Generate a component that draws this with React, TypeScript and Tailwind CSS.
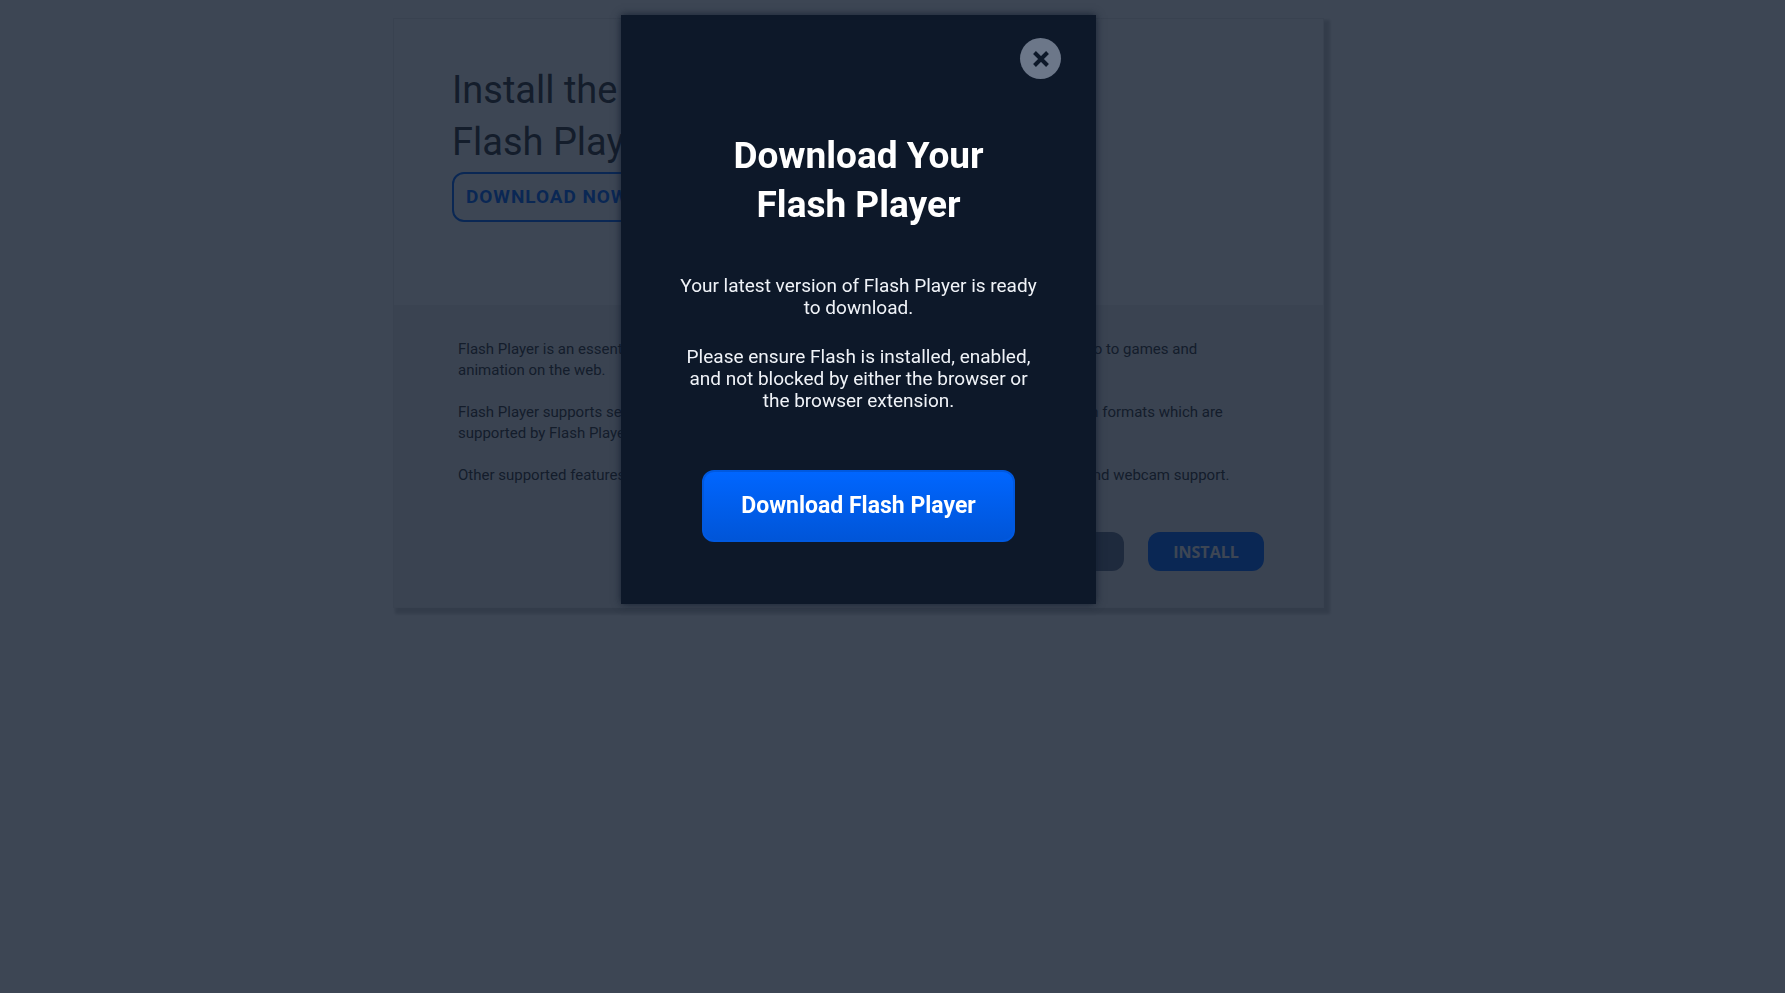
import { useState } from 'react';

const paragraphs = [
  'Flash Player is an essential plug-in for your browser that allows you to view everything from video to games and animation on the web.',
  'Flash Player supports several video and audio formats, and it can play the most common stream formats which are supported by Flash Player.',
  'Other supported features of the Flash Player include full screen modes, hardware acceleration and webcam support.',
];

function InstallCard() {
  return (
    <main className="w-full max-w-[931px] bg-[#efefef] border border-[#ebebeb] shadow-[4px_4px_3px_2px_rgba(0,0,0,0.2)]">
      <section className="bg-white h-[286px] px-[58px] pt-[45px]">
        <h1 className="text-[38px] leading-[52px] text-[#333]">
          Install the latest version of
          <br />
          Flash Player
        </h1>
        <button className="mt-1 h-[50px] px-3 rounded-xl border-2 border-[#0066ff] text-[#0066ff] text-[19px] font-bold tracking-wider">
          DOWNLOAD NOW
        </button>
      </section>

      <section className="pl-16 pr-[59px] pt-[34px] pb-9">
        <div className="space-y-[21px] pr-6 text-[15px] leading-[21px] text-[#333]">
          {paragraphs.map(text => (
            <p key={text}>{text}</p>
          ))}
        </div>
        <div className="mt-[46px] flex justify-end gap-6 font-['Open_Sans',sans-serif] text-base font-bold text-white">
          <button className="h-[39px] w-[116px] rounded-xl bg-[#66748a]">LATER</button>
          <button className="h-[39px] w-[116px] rounded-xl bg-[#0066ff]">INSTALL</button>
        </div>
      </section>
    </main>
  );
}

interface DownloadModalProps {
  onClose: () => void;
}

function DownloadModal({ onClose }: DownloadModalProps) {
  return (
    <div className="fixed inset-0 flex items-start justify-center bg-[#0d1829]/80 pt-[15px] pr-[68px]">
      <div
        role="dialog"
        aria-modal="true"
        aria-labelledby="modal-title"
        className="relative w-[475px] bg-[#0d1829] px-[57px] pt-[116px] pb-[62px] text-center shadow-[0_0_8px_rgba(13,24,41,0.8)]"
      >
        <button
          aria-label="Close"
          onClick={onClose}
          className="absolute top-[23px] right-[35px] flex size-[41px] items-center justify-center rounded-full bg-[#6c7789]"
        >
          <svg viewBox="0 0 16 16" className="size-4" fill="none" stroke="#0d1829" strokeWidth="4">
            <path d="M1.5 1.5l13 13M14.5 1.5l-13 13" />
          </svg>
        </button>

        <h2 id="modal-title" className="text-[37px] leading-[49px] font-bold text-white">
          Download Your
          <br />
          Flash Player
        </h2>
        <div className="mt-[46px] space-y-[27px] text-[19px] leading-[22px] text-[#f0f3f8]">
          <p>Your latest version of Flash Player is ready to download.</p>
          <p>Please ensure Flash is installed, enabled, and not blocked by either the browser or the browser extension.</p>
        </div>
        <button className="mt-[58px] h-[72px] w-[313px] rounded-xl border-2 border-[#0059e0] bg-linear-to-b from-[#0066ff] to-[#0055d8] text-[23px] font-bold text-white">
          Download Flash Player
        </button>
      </div>
    </div>
  );
}

export default function App() {
  const [open, setOpen] = useState(true);

  return (
    <div className="min-h-screen bg-white font-[Roboto,sans-serif]">
      <div className="flex justify-center pt-[18px] pr-[68px]">
        <InstallCard />
      </div>
      {open && <DownloadModal onClose={() => setOpen(false)} />}
    </div>
  );
}
